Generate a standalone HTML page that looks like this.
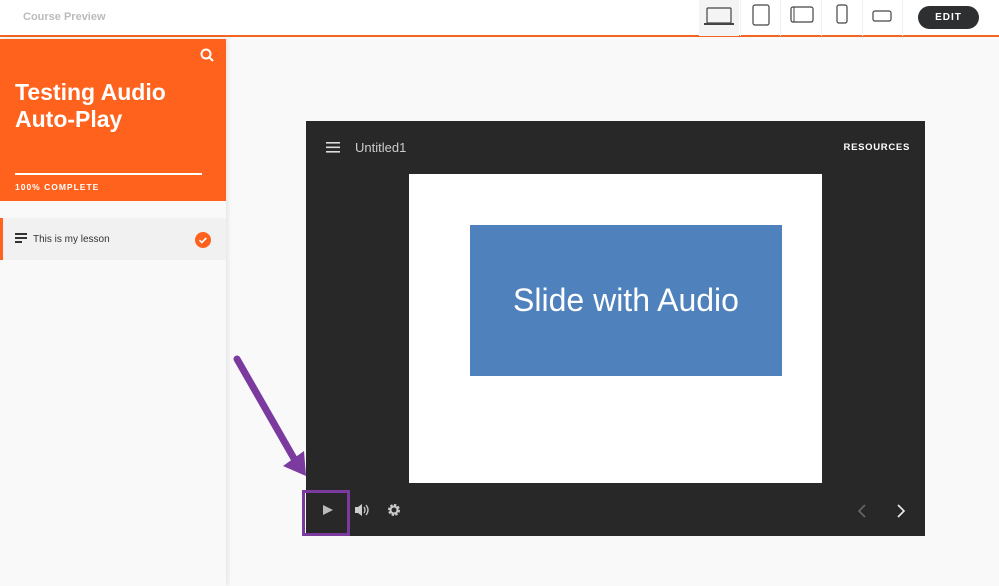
<!DOCTYPE html>
<html><head><style>
*{margin:0;padding:0;box-sizing:border-box}
body{width:999px;height:586px;overflow:hidden;background:#f9f9f9;font-family:"Liberation Sans",sans-serif;position:relative}
.top{position:absolute;left:0;top:0;width:999px;height:37px;background:#fff;border-bottom:2px solid #f26522}
.cp{position:absolute;left:23px;top:11px;font-size:11px;font-weight:bold;color:#bbb}
.dev{position:absolute;top:0;width:40px;height:36px;border-left:1px solid #f0f0f0}
.edit{position:absolute;left:918px;top:6px;width:61px;height:23px;border-radius:12px;background:#2d2f31;color:#fff;font-size:10px;font-weight:bold;letter-spacing:1px;text-align:center;line-height:23px}
.side{position:absolute;left:0;top:39px;width:226px;height:547px;background:#f9f9f9;box-shadow:2px 0 4px rgba(0,0,0,.08)}
.hdr{position:absolute;left:0;top:0;width:226px;height:162px;background:#fe621d}
.title{position:absolute;left:15px;top:40px;color:#fff;font-size:23px;font-weight:bold;line-height:27px}
.bar{position:absolute;left:15px;top:134px;width:187px;height:2px;background:#fff}
.pct{position:absolute;left:15px;top:143px;color:#fff;font-size:8.5px;font-weight:bold;letter-spacing:1px}
.les{position:absolute;left:0;top:179px;width:226px;height:42px;background:#f1f1f1;border-left:3px solid #fe621d}
.player{position:absolute;left:306px;top:121px;width:619px;height:415px;background:#282828}
.slide{position:absolute;left:103px;top:53px;width:413px;height:309px;background:#fff}
.blue{position:absolute;left:61px;top:51px;width:312px;height:151px;background:#4f81bd;color:#fff;font-size:32px;text-align:center;line-height:151px}
</style></head><body>
<div class="top">
<div class="cp">Course Preview</div>
<div class="dev" style="left:699px;background:#f4f4f4;border:none"><svg width="40" height="36"><rect x="8" y="8" width="24" height="15" rx="1" fill="none" stroke="#444" stroke-width="1.2"/><rect x="5" y="23" width="30" height="2" fill="#444"/></svg></div>
<div class="dev" style="left:740px"><svg width="40" height="36"><rect x="12" y="5" width="16" height="20" rx="2" fill="none" stroke="#444" stroke-width="1.2"/></svg></div>
<div class="dev" style="left:780px"><svg width="40" height="36"><rect x="10" y="7" width="22" height="15" rx="2" fill="none" stroke="#444" stroke-width="1.2"/><line x1="13" y1="7" x2="13" y2="22" stroke="#444"/></svg></div>
<div class="dev" style="left:821px"><svg width="40" height="36"><rect x="15" y="5" width="10" height="18" rx="2" fill="none" stroke="#444" stroke-width="1.2"/></svg></div>
<div class="dev" style="left:862px"><svg width="40" height="36"><rect x="10" y="11" width="18" height="10" rx="2" fill="none" stroke="#444" stroke-width="1.2"/></svg></div>
<div class="dev" style="left:902px;width:97px"></div>
<div class="edit">EDIT</div>
</div>
<div class="side">
<div class="hdr">
<svg style="position:absolute;left:200px;top:9px" width="14" height="14"><circle cx="6" cy="6" r="4.5" fill="none" stroke="#fff" stroke-width="2"/><line x1="9.5" y1="9.5" x2="13" y2="13" stroke="#fff" stroke-width="2"/></svg>
<div class="title">Testing Audio<br>Auto-Play</div>
<div class="bar"></div>
<div class="pct">100% COMPLETE</div>
</div>
<div class="les">
<svg style="position:absolute;left:12px;top:15px" width="14" height="12"><rect y="0" width="12" height="2" fill="#333"/><rect y="4" width="12" height="2" fill="#333"/><rect y="8" width="7" height="2" fill="#333"/></svg>
<div style="position:absolute;left:30px;top:16px;font-size:10px;color:#333">This is my lesson</div>
<svg style="position:absolute;left:192px;top:14px" width="16" height="16"><circle cx="8" cy="8" r="8" fill="#fe621d"/><path d="M4.5 8.2l2.3 2.3 4.5-4.5" stroke="#fff" stroke-width="1.6" fill="none"/></svg>
</div>
</div>
<div class="player">
<svg style="position:absolute;left:20px;top:21px" width="14" height="12"><rect y="0" width="14" height="1.6" fill="#ddd"/><rect y="4.5" width="14" height="1.6" fill="#ddd"/><rect y="9" width="14" height="1.6" fill="#ddd"/></svg>
<div style="position:absolute;left:49px;top:19px;color:#ccc;font-size:13px">Untitled1</div>
<div style="position:absolute;right:15px;top:21px;color:#fff;font-size:9.5px;font-weight:bold;letter-spacing:.7px">RESOURCES</div>
<div class="slide"><div class="blue">Slide with Audio</div></div>
<svg style="position:absolute;left:16px;top:383px" width="12" height="12"><path d="M1 1l10 5-10 5z" fill="#bbb"/></svg>
<svg style="position:absolute;left:48px;top:382px" width="16" height="14"><path d="M1 4h3l4-3v12l-4-3H1z" fill="#ccc"/><path d="M10 4q2 3 0 6M12 2q4 5 0 10" stroke="#ccc" stroke-width="1.3" fill="none"/></svg>
<svg style="position:absolute;left:81px;top:382px" width="14" height="14"><circle cx="7" cy="7" r="4.5" fill="none" stroke="#ccc" stroke-width="3" stroke-dasharray="2.2 1.3"/><circle cx="7" cy="7" r="3.5" fill="none" stroke="#ccc" stroke-width="2"/></svg>
<svg style="position:absolute;left:550px;top:382px" width="60" height="16"><path d="M9 2l-6 6 6 6" stroke="#666" stroke-width="1.6" fill="none"/><path d="M42 2l6 6-6 6" stroke="#eee" stroke-width="1.6" fill="none"/></svg>
</div>
<svg style="position:absolute;left:0;top:0" width="999" height="586">
<line x1="237" y1="359" x2="296" y2="462" stroke="#7a3a9e" stroke-width="7" stroke-linecap="round"/>
<path d="M283 466l23 10-2-25z" fill="#7a3a9e"/>
<rect x="303.5" y="491.5" width="45" height="43" fill="none" stroke="#7a3a9e" stroke-width="3"/>
</svg>
</body></html>
